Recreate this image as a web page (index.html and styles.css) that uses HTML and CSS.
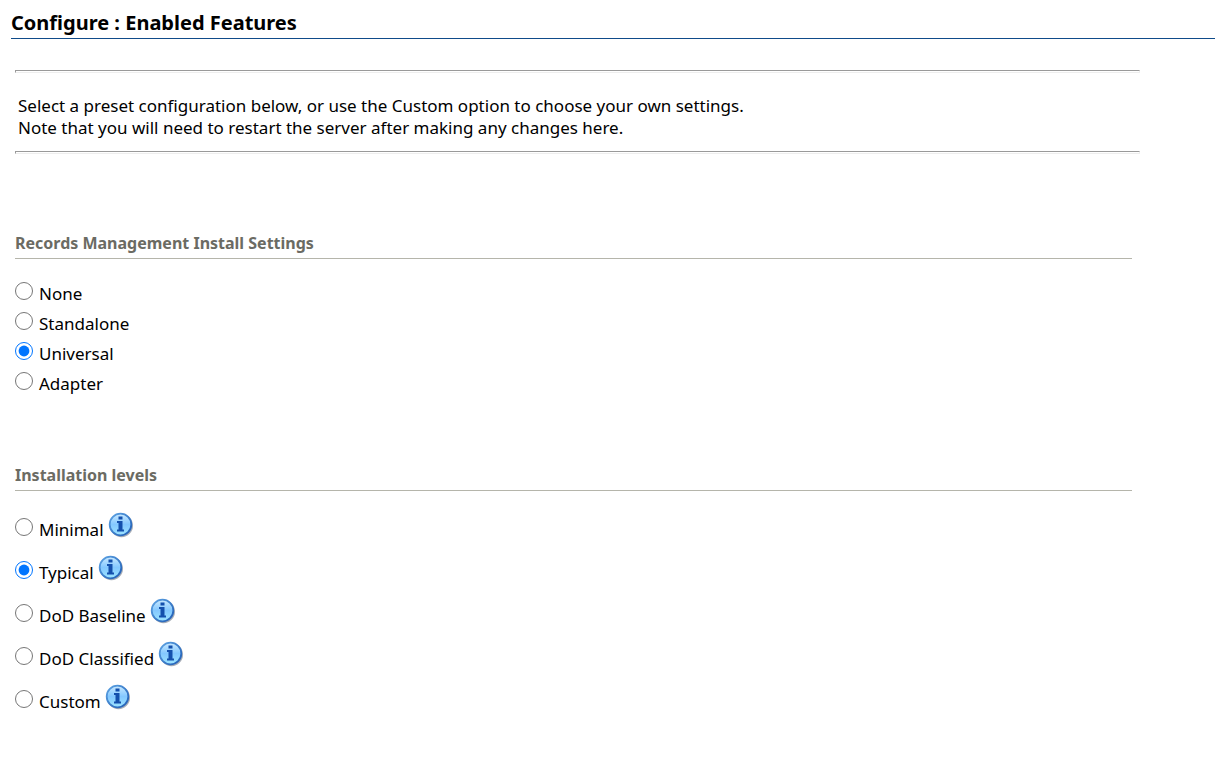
FILE: index.html
```html
<!DOCTYPE html>
<html lang="en">
<head>
<meta charset="utf-8">
<title>Configure : Enabled Features</title>
<link rel="stylesheet" href="styles.css">
</head>
<body>
<svg class="defs" width="0" height="0" aria-hidden="true">
  <defs>
    <linearGradient id="ball" x1="0" y1="0" x2="0" y2="1">
      <stop offset="0" stop-color="#c9e9ff"/>
      <stop offset="0.5" stop-color="#84c8ff"/>
      <stop offset="1" stop-color="#9ce4ff"/>
    </linearGradient>
    <linearGradient id="rim" x1="0" y1="0" x2="1" y2="1">
      <stop offset="0" stop-color="#5ea4e4"/>
      <stop offset="1" stop-color="#1f5cb4"/>
    </linearGradient>
    <symbol id="info" viewBox="0 0 26 26">
      <circle cx="13.5" cy="13.7" r="11.5" fill="#6d7686" opacity="0.6"/>
      <circle cx="12.5" cy="12.5" r="10.8" fill="url(#ball)" stroke="url(#rim)" stroke-width="1.8"/>
      <path d="M10.500 4.500h4v3h-4z M9 9h5.500v8.500h1.500v2h-7v-2h1.500v-6.500h-1.500z" fill="#1450ad"/>
    </symbol>
  </defs>
</svg>
<header class="page-head">
  <h1 class="page-title">Configure : Enabled Features</h1>
</header>
<main class="content">
  <hr class="rule">
  <p class="intro">Select a preset configuration below, or use the Custom option to choose your own settings.<br>Note that you will need to restart the server after making any changes here.</p>
  <hr class="rule">
  <form>
    <section class="group">
      <h2 class="group-title">Records Management Install Settings</h2>
      <div class="options">
        <label class="option"><input class="radio" type="radio" name="rm"><span>None</span></label>
        <label class="option"><input class="radio" type="radio" name="rm"><span>Standalone</span></label>
        <label class="option"><input class="radio" type="radio" name="rm" checked><span>Universal</span></label>
        <label class="option"><input class="radio" type="radio" name="rm"><span>Adapter</span></label>
      </div>
    </section>
    <section class="group">
      <h2 class="group-title">Installation levels</h2>
      <div class="options levels">
        <label class="option"><input class="radio" type="radio" name="level"><span>Minimal</span><svg class="info"><use href="#info"/></svg></label>
        <label class="option"><input class="radio" type="radio" name="level" checked><span>Typical</span><svg class="info"><use href="#info"/></svg></label>
        <label class="option"><input class="radio" type="radio" name="level"><span>DoD Baseline</span><svg class="info"><use href="#info"/></svg></label>
        <label class="option"><input class="radio" type="radio" name="level"><span>DoD Classified</span><svg class="info"><use href="#info"/></svg></label>
        <label class="option"><input class="radio" type="radio" name="level"><span>Custom</span><svg class="info"><use href="#info"/></svg></label>
      </div>
    </section>
  </form>
</main>
</body>
</html>
```
FILE: styles.css
```css
body {
  margin: 0;
  background: #fff;
  color: #000;
  font: 17px/22px Tahoma, "Noto Sans", sans-serif;
}
.defs { position: absolute; }
.page-head {
  margin-left: 11px;
  padding: 10px 0 3px;
  border-bottom: 1px solid #0f4b8a;
}
.page-title {
  margin: 0;
  font-size: 20px;
  line-height: 25px;
}
.content { margin: 31px 75px 0 15px; }
.rule {
  height: 1px;
  margin: 0;
  border: 1px solid;
  border-color: #9a9a9a #eee #eee #9a9a9a;
}
.intro {
  margin: 0;
  padding: 22px 3px 12px;
}
.group { margin: 78px 8px 0 0; }
.group + .group { margin-top: 65px; }
.group-title {
  margin: 0;
  padding-bottom: 4px;
  border-bottom: 1px solid #b5b5ab;
  color: #6b6b63;
  font-size: 16px;
  line-height: 22px;
}
.options { padding-top: 20px; }
.option {
  display: flex;
  align-items: center;
  width: fit-content;
  height: 30px;
}
.levels { padding-top: 17px; }
.levels .option { height: 43px; }
.radio {
  width: 18px;
  height: 18px;
  margin: 0 6px 6px 0;
}
.info {
  width: 26px;
  height: 26px;
  margin: 0 0 10px 4px;
}
```
